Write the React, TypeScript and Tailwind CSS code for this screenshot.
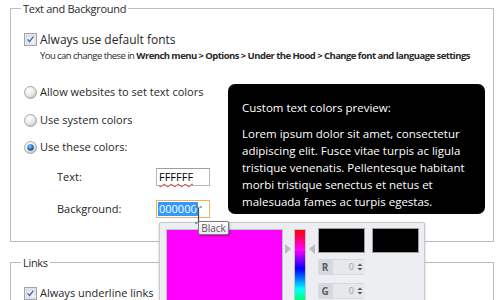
import React from "react";

const Defs = () => (
  <svg width="0" height="0" className="absolute">
    <defs>
      <linearGradient id="cbFill" x1="0" y1="0" x2="1" y2="1">
        <stop offset="0" stopColor="#dde2ea" />
        <stop offset="1" stopColor="#fafbfd" />
      </linearGradient>
      <radialGradient id="rdFill" cx="0.35" cy="0.3" r="0.8">
        <stop offset="0" stopColor="#ffffff" />
        <stop offset="0.6" stopColor="#e6e6e6" />
        <stop offset="1" stopColor="#b5b5b5" />
      </radialGradient>
      <radialGradient id="rdDot" cx="0.4" cy="0.35" r="0.7">
        <stop offset="0" stopColor="#9fd2ff" />
        <stop offset="0.5" stopColor="#2f78d3" />
        <stop offset="1" stopColor="#17408a" />
      </radialGradient>
    </defs>
  </svg>
);

const CheckBox = () => (
  <svg width="13" height="13" viewBox="0 0 13 13" className="shrink-0">
    <rect x="0.5" y="0.5" width="12" height="12" fill="#f4f4f4" stroke="#a4a4a4" />
    <rect x="2" y="2" width="9" height="9" fill="url(#cbFill)" stroke="#c6ccd6" strokeWidth="0.7" />
    <path d="M3.6 6.4 L5.5 8.6 L9.4 3.6" fill="none" stroke="#4a67a8" strokeWidth="1.4" />
  </svg>
);

const Radio = ({ checked }: { checked?: boolean }) => (
  <svg width="13" height="13" viewBox="0 0 13 13" className="shrink-0">
    <circle cx="6.5" cy="6.5" r="6" fill="url(#rdFill)" stroke="#a8a8a8" />
    {checked && <circle cx="6.5" cy="6.5" r="3.2" fill="url(#rdDot)" />}
  </svg>
);

const NumField = ({ label }: { label: string }) => (
  <div className="flex h-[16px] w-[47px] items-center rounded-[2px] bg-[#d6d9dd]">
    <span className="w-[14px] text-center text-[10px] font-bold text-[#5a5d61]">{label}</span>
    <div className="ml-[1px] flex h-[14px] flex-1 items-center justify-end bg-[#e6e8eb] pr-[2px]">
      <span className="text-[9px] text-[#9a9da1]">0</span>
      <svg width="6" height="8" viewBox="0 0 6 8" className="ml-[3px]">
        <path d="M3 0.5 L5.5 3 L0.5 3 Z M3 7.5 L5.5 5 L0.5 5 Z" fill="#55585c" />
      </svg>
    </div>
  </div>
);

export default function App() {
  return (
    <div className="relative h-[300px] w-[500px] overflow-hidden bg-white font-['Open_Sans',sans-serif] text-[#262626]">
      <Defs />

      {/* Text and Background */}
      <fieldset className="ml-[10px] h-[242px] w-[484px] border border-[#bcbcbc]">
        <legend className="ml-[10px] px-[2px] text-[11px] leading-[17px] tracking-[-0.3px] text-[#2a2a2a]">
          Text and Background
        </legend>
        <div className="pl-[13px] pt-[14px]">
          <div className="flex h-[17px] items-center gap-[3px] text-[12px]">
            <CheckBox />
            <span>Always use default fonts</span>
          </div>
          <p className="whitespace-nowrap pl-[16px] text-[9.5px] leading-[15px] tracking-[-0.55px] text-[#2a2a2a]">
            You can change these in{" "}
            <b className="font-bold">
              Wrench menu &gt; Options &gt; Under the Hood &gt; Change font and language settings
            </b>
          </p>

          <div className="mt-[21px] flex">
            <div className="w-[204px] text-[11px]">
              <div className="flex h-[17px] items-center gap-[3px]">
                <Radio />
                <span>Allow websites to set text colors</span>
              </div>
              <div className="mt-[11px] flex h-[17px] items-center gap-[3px]">
                <Radio />
                <span>Use system colors</span>
              </div>
              <div className="mt-[10px] flex h-[17px] items-center gap-[3px]">
                <Radio checked />
                <span>Use these colors:</span>
              </div>
              <div className="mt-[12px] flex items-center pl-[33px]">
                <span className="w-[99px]">Text:</span>
                <div className="flex h-[18px] w-[54px] items-center border border-[#b4b6bb] border-t-[#9c9fa4] pl-[2px]">
                  <span className="text-[11px] leading-[14px] text-black underline decoration-[#e03030] decoration-wavy decoration-[1px] underline-offset-[2px]">
                    FFFFFF
                  </span>
                </div>
              </div>
              <div className="mt-[14px] flex items-center pl-[33px]">
                <span className="w-[99px]">Background:</span>
                <div className="flex h-[18px] w-[54px] items-center border border-[#e2b564] pl-[1px]">
                  <span className="bg-[#3399ff] px-[1px] text-[11px] leading-[14px] text-white">
                    000000
                  </span>
                </div>
              </div>
            </div>

            <div className="h-[130px] w-[257px] rounded-[7px] bg-black px-[14px] pt-[15px] text-[11.5px] leading-[17px] whitespace-nowrap text-white">
              <p>Custom text colors preview:</p>
              <p className="mt-[9px]">
                Lorem ipsum dolor sit amet, consectetur
                <br />
                adipiscing elit. Fusce vitae turpis ac ligula
                <br />
                tristique venenatis. Pellentesque habitant
                <br />
                morbi tristique senectus et netus et
                <br />
                malesuada fames ac turpis egestas.
              </p>
            </div>
          </div>
        </div>
      </fieldset>

      {/* Links */}
      <fieldset className="ml-[10px] mt-[12px] h-[80px] w-[484px] border border-[#bcbcbc]">
        <legend className="ml-[10px] px-[2px] text-[11px] leading-[17px] tracking-[-0.3px] text-[#2a2a2a]">Links</legend>
        <div className="pl-[13px] pt-[14px]">
          <div className="flex h-[17px] items-center gap-[3px] text-[11px]">
            <CheckBox />
            <span>Always underline links</span>
          </div>
        </div>
      </fieldset>

      {/* colour picker popup */}
      <div className="absolute left-[159px] top-[222px] h-[140px] w-[266px] rounded-[2px] border border-[#c6c9cd] bg-[#eceef1] shadow-[0_1px_3px_rgba(0,0,0,0.2)]">
        <div className="flex pl-[6px] pt-[5px]">
          <div className="mt-[1px] h-[120px] w-[117px] border border-[#b6c6cb] bg-[#ff00ff]" />
          <svg width="6" height="10" viewBox="0 0 6 10" className="ml-[2px] mt-[16px]">
            <path d="M0 0 L6 5 L0 10 Z" fill="#b8bcc1" />
          </svg>
          <div className="ml-[3px] mt-[1px] h-[120px] w-[12px] border border-[#c0c4c8] bg-[linear-gradient(to_bottom,#ff0000,#ff00ff_17%,#0000ff_33%,#00ffff_50%,#00ff00_67%,#ffff00_83%,#ff0000)]" />
          <svg width="6" height="10" viewBox="0 0 6 10" className="ml-[3px] mt-[16px]">
            <path d="M6 0 L0 5 L6 10 Z" fill="#b8bcc1" />
          </svg>
          <div className="ml-[3px] flex flex-col">
            <div className="flex gap-[7px]">
              <div className="h-[25px] w-[47px] border border-[#9da0a4] bg-black" />
              <div className="h-[25px] w-[47px] border border-[#9da0a4] bg-black" />
            </div>
            <div className="mt-[6px] flex flex-col gap-[8px]">
              <NumField label="R" />
              <NumField label="G" />
            </div>
          </div>
        </div>
      </div>

      {/* I-beam cursor */}
      <svg width="9" height="18" viewBox="0 0 9 18" className="absolute left-[194px] top-[206px]">
        <path d="M1 1 H3.5 M5.5 1 H8 M4.5 1.5 V16.5 M1 17 H3.5 M5.5 17 H8" fill="none" stroke="#4a4a4a" strokeWidth="1.2" />
      </svg>

      {/* tooltip */}
      <div className="absolute left-[198px] top-[221px] flex h-[14px] w-[31px] items-center justify-center rounded-[2px] border border-[#7a7a7a] bg-[linear-gradient(to_bottom,#ffffff,#e6e7ef)] text-[10px] leading-[12px] text-[#575757] shadow-[1px_1px_2px_rgba(0,0,0,0.3)]">
        Black
      </div>
    </div>
  );
}
